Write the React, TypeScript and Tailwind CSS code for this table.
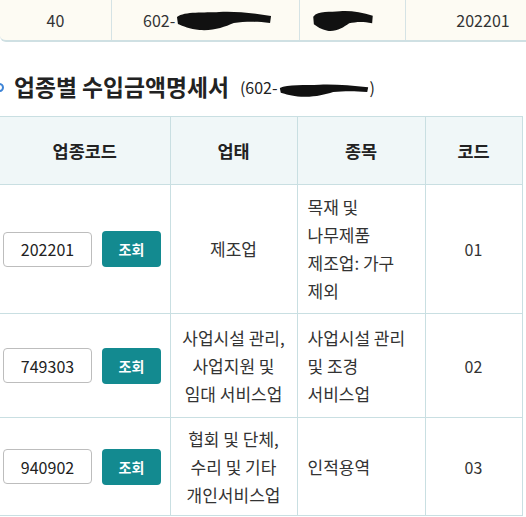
import React from "react";

type Row = {
  code: string;
  biz: string[];
  item: string[];
  no: string;
  h: string;
};

const ROWS: Row[] = [
  { code: "202201", biz: ["제조업"], item: ["목재 및", "나무제품", "제조업: 가구", "제외"], no: "01", h: "h-[129px]" },
  { code: "749303", biz: ["사업시설 관리,", "사업지원 및", "임대 서비스업"], item: ["사업시설 관리", "및 조경", "서비스업"], no: "02", h: "h-[104px]" },
  { code: "940902", biz: ["협회 및 단체,", "수리 및 기타", "개인서비스업"], item: ["인적용역"], no: "03", h: "h-[98px]" },
];

function Scribble({ w, h }: { w: number; h: number }) {
  return (
    <svg width={w} height={h} viewBox="0 0 100 24" preserveAspectRatio="none" className="inline-block align-middle">
      <path
        d="M2 9 C10 3 30 5 45 4 C60 3 80 5 98 8 L97 15 C80 13 70 14 60 15 C50 19 40 23 25 22 C15 21 8 18 3 16 Z"
        fill="#111"
      />
    </svg>
  );
}

function Lines({ lines }: { lines: string[] }) {
  return (
    <>
      {lines.map((l, i) => (
        <div key={i} className="whitespace-nowrap">
          {l}
        </div>
      ))}
    </>
  );
}

export default function App() {
  return (
    <div className="h-[517px] w-[526px] overflow-hidden bg-white text-[#333] font-['Noto_Sans_CJK_KR','Noto_Sans',sans-serif]">
      {/* tail of the previous table */}
      <div className="flex h-[42px] w-[570px] items-center rounded-bl-md border-b-2 border-[#cfe0e3] bg-[#fdfbf3] text-[16px]">
        <div className="flex h-full w-[112px] items-center justify-center border-r border-[#d5e3e5]">40</div>
        <div className="flex h-full w-[188px] items-center border-r border-[#d5e3e5] pl-[31px]">
          602-
          <Scribble w={98} h={24} />
        </div>
        <div className="flex h-full w-[106px] items-center border-r border-[#d5e3e5] pl-[12px]">
          <Scribble w={62} h={26} />
        </div>
        <div className="flex h-full w-[154px] items-center justify-center">202201</div>
      </div>

      {/* section title */}
      <div className="ml-[-5px] mt-[33px] flex h-[24px] items-center">
        <span className="mr-[10px] inline-block h-[9px] w-[9px] rounded-full border-2 border-[#3f84d6]" />
        <span className="text-[22.8px] font-bold text-[#222]">업종별 수입금액명세서</span>
        <span className="ml-[11px] text-[16px] text-[#222]">
          (602-
          <Scribble w={92} h={16} />)
        </span>
      </div>

      {/* table */}
      <table className="mt-[17px] w-[522px] table-fixed border-collapse text-[17px] leading-[28px]">
        <colgroup>
          <col className="w-[170px]" />
          <col className="w-[127px]" />
          <col className="w-[128px]" />
          <col className="w-[97px]" />
        </colgroup>
        <thead>
          <tr className="h-[68px] bg-[#f0f7f8]">
            {["업종코드", "업태", "종목", "코드"].map((t, i) => (
              <th
                key={t}
                className={`border-y border-r border-[#c9dfe2] text-center text-[17.5px] font-bold text-[#222] ${i > 0 ? "border-l" : ""}`}
              >
                {t}
              </th>
            ))}
          </tr>
        </thead>
        <tbody>
          {ROWS.map((r) => (
            <tr key={r.code} className={r.h}>
              <td className="border-b border-r border-[#c9dfe2] pl-[3px]">
                <div className="flex items-center gap-[10px]">
                  <div className="flex h-[35px] w-[89px] items-center justify-center rounded-[4px] border border-[#bdbdbd] bg-white text-[16px] text-[#222]">
                    {r.code}
                  </div>
                  <button
                    type="button"
                    className="flex h-[36px] w-[59px] items-center justify-center rounded-[4px] bg-[#138a90] text-[14px] font-bold text-white"
                  >
                    조회
                  </button>
                </div>
              </td>
              <td className="border border-[#c9dfe2] text-center">
                <Lines lines={r.biz} />
              </td>
              <td className="border border-[#c9dfe2] pl-[10px] text-left">
                <Lines lines={r.item} />
              </td>
              <td className="border border-[#c9dfe2] text-center text-[16px]">{r.no}</td>
            </tr>
          ))}
        </tbody>
      </table>
    </div>
  );
}
